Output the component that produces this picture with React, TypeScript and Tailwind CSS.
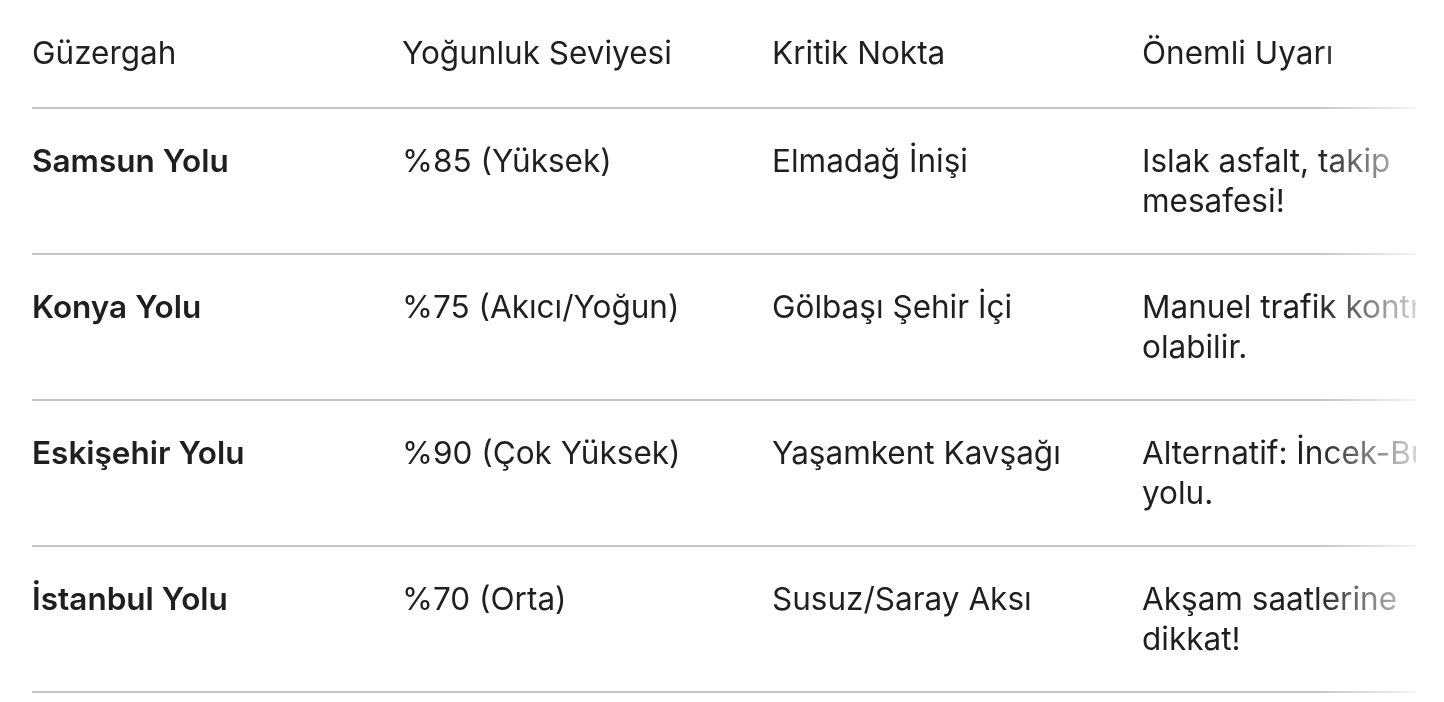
const rows = [
  { route: "Samsun Yolu", level: "%85 (Yüksek)", point: "Elmadağ İnişi", note: "Islak asfalt, takip mesafesi!" },
  { route: "Konya Yolu", level: "%75 (Akıcı/Yoğun)", point: "Gölbaşı Şehir İçi", note: "Manuel trafik kontrolü olabilir." },
  { route: "Eskişehir Yolu", level: "%90 (Çok Yüksek)", point: "Yaşamkent Kavşağı", note: "Alternatif: İncek-Bulvar yolu." },
  { route: "İstanbul Yolu", level: "%70 (Orta)", point: "Susuz/Saray Aksı", note: "Akşam saatlerine dikkat!" },
];

const headers = ["Güzergah", "Yoğunluk Seviyesi", "Kritik Nokta", "Önemli Uyarı"];

export default function App() {
  return (
    <div className="min-h-screen bg-white pl-8 pr-7 font-['Inter','Roboto',sans-serif] text-[#1f1f1f]">
      <div className="overflow-hidden [mask-image:linear-gradient(to_right,#000_calc(100%-100px),rgba(0,0,0,0.2))]">
        <table className="w-[1490px] table-fixed border-collapse text-[31.5px] leading-[40px]">
          <colgroup>
            <col className="w-[370px]" />
            <col className="w-[370px]" />
            <col className="w-[370px]" />
            <col className="w-[380px]" />
          </colgroup>
          <thead>
            <tr className="border-b-2 border-[#c4c4c4]">
              {headers.map((h) => (
                <th key={h} className="pt-[33px] pb-[34px] pr-8 text-left align-top font-normal">
                  {h}
                </th>
              ))}
            </tr>
          </thead>
          <tbody>
            {rows.map((r) => (
              <tr key={r.route} className="border-b-2 border-[#c4c4c4]">
                <td className="py-8 pr-8 align-top font-semibold">{r.route}</td>
                <td className="py-8 pr-8 align-top">{r.level}</td>
                <td className="py-8 pr-8 align-top">{r.point}</td>
                <td className="py-8 pr-8 align-top">{r.note}</td>
              </tr>
            ))}
          </tbody>
        </table>
      </div>
    </div>
  );
}
